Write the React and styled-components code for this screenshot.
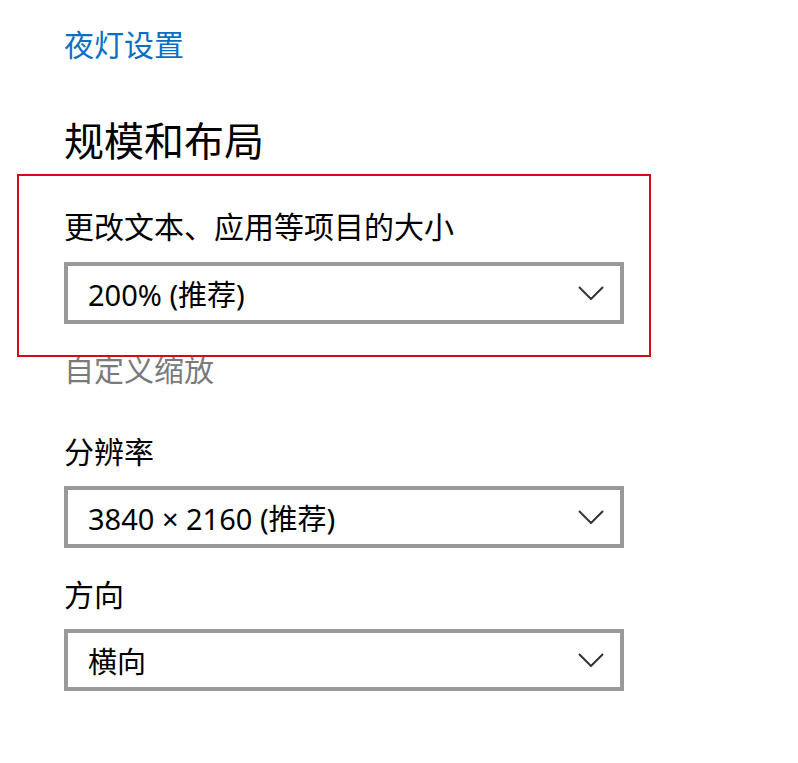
import React from 'react';
import styled, { createGlobalStyle } from 'styled-components';

const GlobalStyle = createGlobalStyle`
  html, body {
    margin: 0;
    padding: 0;
    background: #ffffff;
  }
  body {
    font-family: 'Noto Sans', 'Noto Sans CJK SC', sans-serif;
    color: #000000;
  }
`;

const Page = styled.div`
  display: flex;
  flex-direction: column;
  align-items: flex-start;
  padding: 25px 0 40px 64px;
  min-height: 100vh;
  box-sizing: border-box;
`;

const Link = styled.a`
  font-size: 30px;
  line-height: 40px;
  color: #0a6fc2;
  text-decoration: none;
  cursor: pointer;
`;

const Heading = styled.h2`
  margin: 48px 0 0;
  font-size: 40px;
  line-height: 56px;
  font-weight: 400;
`;

const Field = styled.div`
  display: flex;
  flex-direction: column;
  gap: ${p => p.gap || 14}px;
  margin-top: ${p => p.top}px;
  position: relative;
`;

/* red annotation frame drawn over the group */
const Highlight = styled.div`
  position: absolute;
  left: -47px;
  top: -33px;
  right: -27px;
  bottom: -33px;
  border: 2px solid #d40b14;
  pointer-events: none;
`;

const Label = styled.div`
  font-size: 30px;
  line-height: 40px;
  color: ${p => (p.muted ? '#7a7a7a' : '#000000')};
  margin-top: ${p => p.top || 0}px;
`;

const Select = styled.div`
  width: 560px;
  height: 62px;
  box-sizing: border-box;
  border: 4px solid #999999;
  background: #ffffff;
  display: flex;
  align-items: center;
  justify-content: space-between;
  padding: 0 16px 0 20px;
  font-size: 29px;
  color: #000000;
`;

const Chevron = () => (
  <svg width="26" height="14" viewBox="0 0 26 14" fill="none">
    <path d="M1 1 L13 13 L25 1" stroke="#333333" strokeWidth="2" />
  </svg>
);

const Dropdown = ({ value }) => (
  <Select>
    <span>{value}</span>
    <Chevron />
  </Select>
);

const App = () => (
  <>
    <GlobalStyle />
    <Page>
      <Link>夜灯设置</Link>
      <Heading>规模和布局</Heading>

      <Field top={38} gap={15}>
        <Highlight />
        <Label>更改文本、应用等项目的大小</Label>
        <Dropdown value="200% (推荐)" />
      </Field>

      <Label muted top={26}>自定义缩放</Label>

      <Field top={42}>
        <Label>分辨率</Label>
        <Dropdown value="3840 × 2160 (推荐)" />
      </Field>

      <Field top={27}>
        <Label>方向</Label>
        <Dropdown value="横向" />
      </Field>
    </Page>
  </>
);

export default App;
